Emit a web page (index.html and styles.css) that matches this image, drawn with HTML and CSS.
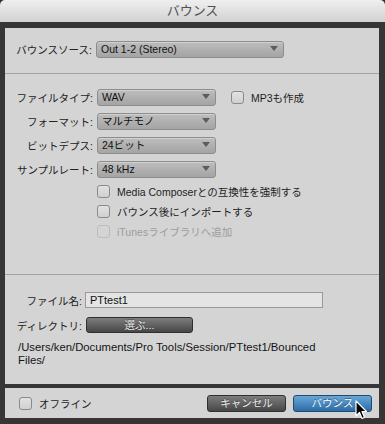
FILE: index.html
```html
<!DOCTYPE html>
<html lang="ja">
<head>
  <meta charset="UTF-8">
  <meta name="viewport" content="width=device-width, initial-scale=1.0">
  <title>バウンス</title>
  <link rel="stylesheet" href="styles.css">
</head>
<body>
  <div class="window">
    <div class="titlebar">バウンス</div>

    <div class="frame">
      <div class="panel">
        <div class="sec sec-source">
          <label class="lbl">バウンスソース:</label>
          <div class="select select-wide">Out 1-2 (Stereo)</div>
        </div>

        <div class="sec sec-format">
          <div class="format-grid">
            <label class="lbl">ファイルタイプ:</label>
            <div class="select">WAV</div>
            <div class="check-row check-mp3"><span class="box"></span>MP3も作成</div>

            <label class="lbl">フォーマット:</label>
            <div class="select">マルチモノ</div>

            <label class="lbl">ビットデプス:</label>
            <div class="select">24ビット</div>

            <label class="lbl">サンプルレート:</label>
            <div class="select">48 kHz</div>
          </div>

          <div class="checks">
            <div class="check-row"><span class="box"></span>Media Composerとの互換性を強制する</div>
            <div class="check-row"><span class="box"></span>バウンス後にインポートする</div>
            <div class="check-row disabled"><span class="box"></span>iTunesライブラリへ追加</div>
          </div>
        </div>

        <div class="sec sec-file">
          <div class="file-grid">
            <label class="lbl">ファイル名:</label>
            <div class="field">PTtest1</div>
            <label class="lbl">ディレクトリ:</label>
            <div class="btn btn-dark btn-choose">選ぶ...</div>
          </div>
          <p class="path">/Users/ken/Documents/Pro Tools/Session/PTtest1/Bounced Files/</p>
        </div>
      </div>

      <div class="footer">
        <div class="check-row"><span class="box"></span>オフライン</div>
        <div class="spacer"></div>
        <div class="btn btn-dark">キャンセル</div>
        <div class="btn btn-blue">バウンス</div>
      </div>
    </div>

    <svg class="cursor" width="13" height="20" viewBox="0 0 13 20">
      <path d="M1 1 L1 16 L4.5 12.5 L7 18.5 L9.5 17.5 L7 11.5 L11.5 11.5 Z" fill="#000" stroke="#fff" stroke-width="1.2" stroke-linejoin="round"/>
    </svg>
  </div>
</body>
</html>
```

FILE: styles.css
```css
body {
  margin: 0;
  background-color: #2e2e2e;
  font-family: "Liberation Sans", "Noto Sans CJK JP", sans-serif;
  font-size: 10.5px;
  color: #1a1a1a;
}
.window {
  position: relative;
  width: 385px;
  height: 424px;
  display: flex;
  flex-direction: column;
}
.titlebar {
  height: 22px;
  line-height: 22px;
  text-align: center;
  font-size: 13px;
  color: #505050;
  background: linear-gradient(#efefef, #d2d2d2);
  border-radius: 5px 5px 0 0;
}
.frame {
  flex: 1;
  background-color: #363636;
  padding: 6px 6px 6px 5px;
  display: flex;
  flex-direction: column;
  gap: 4px;
}
.panel {
  height: 356px;
  background-color: #d4d4d4;
  display: flex;
  flex-direction: column;
}
.sec {
  box-sizing: border-box;
  border-bottom: 1px solid #a3a3a3;
}
.sec-source {
  height: 46px;
  padding-top: 13px;
  display: grid;
  grid-template-columns: 87px auto;
  column-gap: 4px;
  align-content: start;
  align-items: center;
}
.sec-format {
  height: 201px;
  padding-top: 15px;
}
.format-grid {
  display: grid;
  grid-template-columns: 88px 119px auto;
  column-gap: 4px;
  row-gap: 7px;
  grid-auto-rows: 17px;
  align-items: center;
}
.format-grid .lbl {
  grid-column: 1;
}
.format-grid .select {
  grid-column: 2;
}
.format-grid .check-mp3 {
  grid-column: 3;
}
.checks {
  display: flex;
  flex-direction: column;
  gap: 7px;
  margin-top: 7px;
  padding-left: 92px;
}
.checks .check-row {
  height: 13px;
}
.sec-file {
  flex: 1;
  border-bottom: none;
  padding-top: 17px;
}
.lbl {
  text-align: right;
  color: #222;
  white-space: nowrap;
}
.select {
  position: relative;
  box-sizing: border-box;
  height: 17px;
  line-height: 15px;
  padding-left: 4px;
  border: 1px solid #8d8d8d;
  border-radius: 3px;
  background: linear-gradient(#bdbdbd, #a4a4a4);
  box-shadow: inset 0 1px 0 rgba(255, 255, 255, 0.3);
  color: #111;
}
.select::after {
  content: "";
  position: absolute;
  right: 5px;
  top: 4px;
  border-left: 4px solid transparent;
  border-right: 4px solid transparent;
  border-top: 5px solid #5c5c5c;
}
.select-wide {
  width: 188px;
}
.check-row {
  display: flex;
  align-items: center;
  gap: 7px;
  white-space: nowrap;
  color: #1e1e1e;
}
.check-mp3 {
  margin-left: 11px;
}
.box {
  box-sizing: border-box;
  width: 13px;
  height: 13px;
  border: 1px solid #8a8a8a;
  border-radius: 3px;
  background: linear-gradient(#e2e2e2, #d0d0d0);
}
.disabled {
  color: #9d9d9d;
}
.disabled .box {
  border-color: #bcbcbc;
  background: #d4d4d4;
}
.file-grid {
  display: grid;
  grid-template-columns: 77px 238px;
  column-gap: 3px;
  row-gap: 9px;
  grid-auto-rows: 16px;
  align-items: center;
}
.field {
  box-sizing: border-box;
  height: 16px;
  line-height: 14px;
  padding-left: 4px;
  border: 1px solid #999;
  background-color: #e4e4e4;
  font-size: 11px;
  color: #111;
}
.btn {
  box-sizing: border-box;
  height: 17px;
  line-height: 15px;
  text-align: center;
  border-radius: 3px;
  color: #ececec;
  text-shadow: 0 -1px 0 rgba(0, 0, 0, 0.4);
}
.btn-dark {
  width: 79px;
  border: 1px solid #2f2f2f;
  background: linear-gradient(#7d7d7d, #474747);
}
.btn-choose {
  width: 107px;
  margin-left: 1px;
  height: 16px;
  line-height: 14px;
}
.btn-blue {
  width: 79px;
  border: 1px solid #1f4b72;
  background: linear-gradient(#66a6d8, #2d6da5);
  color: #f4f8fc;
}
.path {
  margin: 8px 0 0 13px;
  width: 300px;
  line-height: 13px;
  font-size: 11.3px;
  color: #151515;
}
.footer {
  height: 30px;
  background-color: #d4d4d4;
  display: flex;
  align-items: center;
  gap: 7px;
  padding: 0 7px 0 14px;
}
.spacer {
  flex: 1;
}
.cursor {
  position: absolute;
  left: 355px;
  top: 400px;
}
```
